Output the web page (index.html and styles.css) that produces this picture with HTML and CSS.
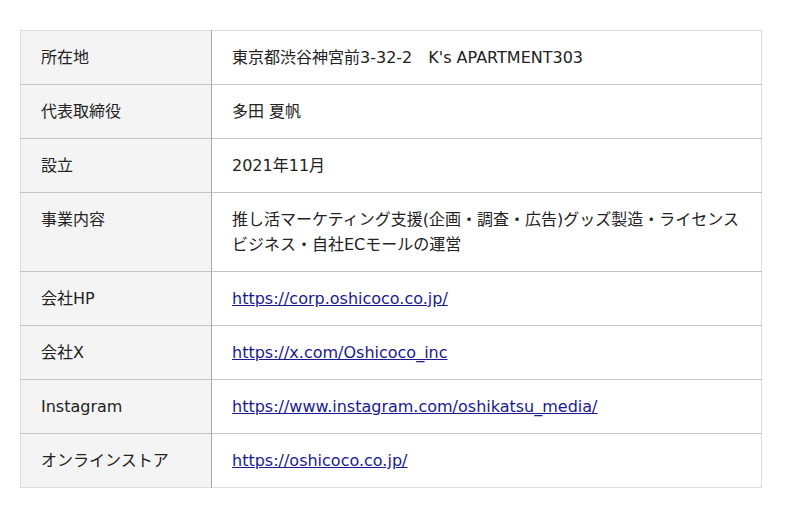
FILE: index.html
```html
<!DOCTYPE html>
<html lang="ja">
<head>
<meta charset="utf-8">
<link rel="stylesheet" href="styles.css">
</head>
<body>
<table class="info">
  <tr><th>所在地</th><td>東京都渋谷神宮前3-32-2　K's APARTMENT303</td></tr>
  <tr><th>代表取締役</th><td>多田 夏帆</td></tr>
  <tr><th>設立</th><td>2021年11月</td></tr>
  <tr><th>事業内容</th><td>推し活マーケティング支援(企画・調査・広告)グッズ製造・ライセンスビジネス・自社ECモールの運営</td></tr>
  <tr><th>会社HP</th><td><a href="#">https://corp.oshicoco.co.jp/</a></td></tr>
  <tr><th>会社X</th><td><a href="#">https://x.com/Oshicoco_inc</a></td></tr>
  <tr><th>Instagram</th><td><a href="#">https://www.instagram.com/oshikatsu_media/</a></td></tr>
  <tr><th>オンラインストア</th><td><a href="#">https://oshicoco.co.jp/</a></td></tr>
</table>
</body>
</html>
```
FILE: styles.css
```css
html, body {
  margin: 0;
  padding: 0;
  background: #fff;
}
body {
  padding: 30px 20px;
  font-family: "DejaVu Sans", "Noto Sans CJK JP", sans-serif;
  font-size: 16px;
  color: #222;
}
.info {
  width: 742px;
  border-collapse: collapse;
  border: 1px solid #dcdcdc;
}
.info th,
.info td {
  padding: 14px 20px;
  line-height: 25px;
  text-align: left;
  vertical-align: top;
  font-weight: normal;
  border-top: 1px solid #c4c4c4;
}
.info tr:first-child th,
.info tr:first-child td {
  border-top: 1px solid #dcdcdc;
}
.info th {
  width: 150px;
  background: #f4f4f4;
  border-right: 1px solid #a8a8a8;
}
.info td {
  background: #fff;
}
.info a {
  color: #1a1a8f;
  text-decoration: underline;
}
```
